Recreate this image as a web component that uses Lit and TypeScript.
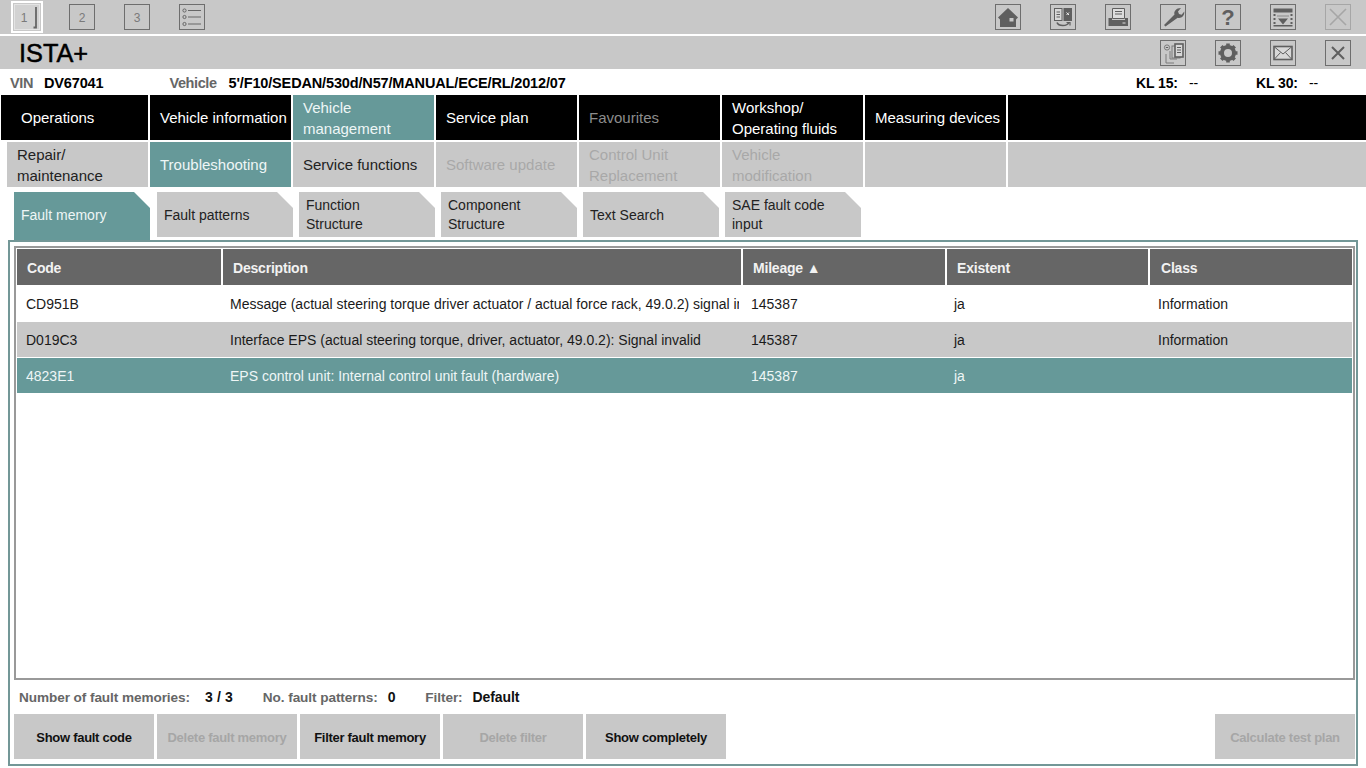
import { LitElement, html, css, svg } from "lit";
import { customElement } from "lit/decorators.js";

const G = "#5f5f5f";
const icons: Record<string, any> = {
  n1: svg`<text x="10" y="18" font-size="12" fill="#7a7a7a" text-anchor="middle" font-family="Liberation Sans">1</text><path d="M22 3v20.500h-2.500" fill="none" stroke="#666" stroke-width="1.800"/>`,
  n2: svg`<text x="13" y="18" font-size="12" fill="#7a7a7a" text-anchor="middle" font-family="Liberation Sans">2</text>`,
  n3: svg`<text x="13" y="18" font-size="12" fill="#7a7a7a" text-anchor="middle" font-family="Liberation Sans">3</text>`,
  list: svg`<g fill="none" stroke="#666"><circle cx="5.500" cy="6.500" r="1.600"/><circle cx="5.500" cy="13" r="1.600"/><circle cx="5.500" cy="20" r="1.600"/><path d="M9 6.500h13M9 13h13M9 20h13"/></g>`,
  home: svg`<path d="M13 4 3 13.500 5 15.500V23h16v-7.500l2-2z" fill="${G}"/><rect x="14.500" y="14" width="4" height="3.500" fill="#c8c8c8"/>`,
  swap: svg`<g fill="none" stroke="${G}"><rect x="4.500" y="4.500" width="7.500" height="12" fill="#d8d8d8"/><rect x="14" y="4.500" width="7.500" height="12" fill="${G}"/><path d="M6.500 8h3.500M6.500 10.500h3.500M6.500 13h3.500"/><path d="M16.500 8.500l2.500 2.500M19 8.500l-2.500 2.500" stroke="#eee"/><path d="M7 18.500c1.500 4 10 4 12 0" stroke-width="1.600"/><path d="M16.500 18.500h3.500v3" stroke-width="1.200"/></g>`,
  printer: svg`<path d="M7.500 4.500h12v10h-12z" fill="#ddd" stroke="${G}"/><path d="M10 7.500h7M10 10h7" stroke="${G}"/><path d="M3.500 14h3.500v2h13v-2h3v8h-19.500z" fill="${G}"/><path d="M17.500 19h3" stroke="#ddd"/>`,
  wrench: svg`<path d="M5.500 22.500 4 21l10.500-10.500c-1-3 1.500-6.500 6.500-6.500l-3 3.500 1 2.500 2.600.8 2.700-3.200c.4 4.500-3.300 7.200-6.600 6.200z" fill="${G}"/>`,
  help: svg`<text x="13" y="21" font-size="22" font-weight="700" fill="${G}" text-anchor="middle" font-family="Liberation Sans">?</text>`,
  down: svg`<rect x="3.500" y="4.500" width="19" height="4" fill="${G}"/><rect x="3.500" y="21" width="19" height="1.500" fill="${G}"/><path d="M4.500 10v10M21.500 10v10" stroke="${G}" stroke-width="2" stroke-dasharray="2 2"/><path d="M8 14.500h10l-5 6z" fill="${G}"/><path d="M7 12h12" stroke="#8a8a8a"/>`,
  xoff: svg`<path d="M5 5l16 16M21 5 5 21" stroke="#a6a6a6" stroke-width="1.600"/>`,
  docs: svg`<g fill="none" stroke="${G}"><circle cx="7" cy="7.500" r="2.600" stroke="#7a7a7a"/><path d="M5.800 7.500h2.400"/><path d="M6 14v9h8" stroke="#7a7a7a"/><path d="M10 11v8h7" stroke="#7a7a7a"/><rect x="12" y="6" width="8" height="12" stroke="#7a7a7a"/><rect x="15" y="4" width="8" height="13" fill="#d8d8d8" stroke-width="1.600"/><path d="M17 7.500h4M17 10h4M17 12.500h4"/></g>`,
  gear: svg`<circle cx="13" cy="13" r="6" fill="none" stroke="${G}" stroke-width="4"/><g stroke="${G}" stroke-width="3.600"><path d="M13 3.500v4M13 18.500v4M3.500 13h4M18.500 13h4M6.300 6.300l2.800 2.800M16.900 16.900l2.800 2.800M19.700 6.300l-2.800 2.800M9.100 16.900l-2.800 2.800"/></g>`,
  mail: svg`<rect x="4" y="6.500" width="18" height="13" fill="#d8d8d8" stroke="${G}" stroke-width="1.600"/><path d="M4.500 7l8.500 7 8.500-7M4.500 19l6-6.500M21.500 19l-6-6.500" fill="none" stroke="${G}"/>`,
  x: svg`<path d="M7 7l12 12M19 7 7 19" stroke="${G}" stroke-width="2"/>`,
};

const nav = [["Operations"], ["Vehicle information"], ["Vehicle", "management"], ["Service plan"], ["Favourites"], ["Workshop/", "Operating fluids"], ["Measuring devices"], []];
const sub = [["Repair/", "maintenance"], ["Troubleshooting"], ["Service functions"], ["Software update"], ["Control Unit", "Replacement"], ["Vehicle", "modification"], [], []];
const tabs = [["Fault memory"], ["Fault patterns"], ["Function", "Structure"], ["Component", "Structure"], ["Text Search"], ["SAE fault code", "input"]];
const rows = [
  ["CD951B", "Message (actual steering torque driver actuator / actual force rack, 49.0.2) signal invalid", "145387", "ja", "Information"],
  ["D019C3", "Interface EPS (actual steering torque, driver, actuator, 49.0.2): Signal invalid", "145387", "ja", "Information"],
  ["4823E1", "EPS control unit: Internal control unit fault (hardware)", "145387", "ja", ""],
];

@customElement("app-root")
export class AppRoot extends LitElement {
  static styles = css`
    :host { display: block; width: 1366px; height: 768px; overflow: hidden; background: #fff; font-family: "Liberation Sans", Arial, sans-serif; color: #000; }
    .bar { background: #c8c8c8; display: flex; align-items: center; }
    .top { height: 34px; padding: 0 15px 0 14px; margin-bottom: 2px; }
    .title { height: 33px; padding: 0 15px 0 19px; }
    .title h1 { margin: 1px 0 0; font-size: 25.300px; font-weight: 400; line-height: 32px; color: #000; -webkit-text-stroke: 0.5px #000; }
    .group { display: flex; gap: 29px; }
    .right { margin-left: auto; }
    .ic { width: 26px; height: 26px; box-sizing: border-box; border: 1px solid #6e6e6e; display: block; }
    .ic svg { display: block; width: 26px; height: 26px; margin: -1px; }
    .ic.off { border-color: #a6a6a6; }
    .ic.active { border-color: #e4e4e4; box-shadow: 0 0 0 1px #c8c8c8, 0 0 0 3px #fff; background: #d2d2d2; }
    .vin { height: 26px; box-sizing: border-box; padding: 2px 0 0 10px; display: flex; align-items: center; font-size: 14.500px; }
    .vin .l { color: #666; font-weight: 700; letter-spacing: -0.4px; }
    .vin .vinl { margin-right: 11px; }
    .vin .v { font-weight: 700; color: #000; letter-spacing: -0.15px; }
    .vin .veh { margin-left: 66px; margin-right: 12px; }
    .kl { margin-left: auto; display: flex; font-weight: 700; font-size: 14px; letter-spacing: -0.1px; }
    .kl span { margin-right: 11px; }
    .kl .k { width: 120px; display: flex; }
    .kl .k i { font-style: normal; font-weight: 400; }
    .kl .k:last-child { width: 110px; }
    .nav { display: grid; grid-template-columns: 147px repeat(6, 141px) 1fr; column-gap: 2px; padding-left: 1px; }
    .nav > div { height: 45px; background: #000; color: #fff; font-size: 15px; line-height: 21px; padding: 0 0 0 10px; display: flex; align-items: center; box-sizing: border-box; white-space: pre-line; }
    .nav > div:first-child { padding-left: 20px; }
    .nav > div.sel { background: #669999; color: #eef6f6; }
    .nav > div.dim { color: #8c8c8c; }
    .sub { margin-top: 2px; padding-left: 7px; grid-template-columns: 141px repeat(6, 141px) 1fr; }
    .sub > div { background: #c8c8c8; color: #222; }
    .sub > div:first-child { padding-left: 10px; }
    .sub > div.dim { color: #a8a8a8; }
    .tabs { display: flex; gap: 6px; height: 48px; margin-top: 5px; padding-left: 14px; }
    .tab { width: 136px; height: 45px; background: #c8c8c8; color: #222; font-size: 14px; line-height: 19px; padding-left: 7px; box-sizing: border-box; display: flex; align-items: center; clip-path: polygon(0 0, calc(100% - 16px) 0, 100% 16px, 100% 100%, 0 100%); white-space: pre-line; }
    .tab.one { padding-top: 1px; }
    .tab.sel { margin-right: 1px; height: 48px; padding-top: 0; padding-bottom: 2px; background: #669999; color: #eef6f6; }
    .panel { margin-left: 8px; width: 1350px; height: 526px; box-sizing: border-box; border: 2px solid #739797; padding: 4px 1px 0 4px; }
    .tbl { width: 1341px; height: 434px; box-sizing: border-box; border: 2px solid #999; padding: 1px 1px 0 1px; }
    .row { display: grid; grid-template-columns: 206px 520px 204px 203px 1fr; font-size: 14px; }
    .row > div { overflow: hidden; white-space: nowrap; display: flex; align-items: center; box-sizing: border-box; padding-left: 8px; padding-top: 1px; }
    .row > div:nth-child(1) { padding-left: 9px; }
    .row > div:nth-child(2) { padding-left: 7px; border-right: 4px solid transparent; }
    .row > div:nth-child(4) { padding-left: 7px; }
    .row.head > div { background: #666; color: #f2f2f2; height: 36px; font-weight: 700; border-right: 2px solid #fff; padding-left: 10px; letter-spacing: -0.2px; }
    .row.head > div:last-child { border-right: 0; padding-left: 11px; }
    .r0 { height: 37px; background: #fff; color: #1a1a1a; }
    .r1 { height: 35px; background: #c8c8c8; color: #1a1a1a; margin-bottom: 1px; }
    .r2 { height: 35px; background: #669999; color: #eef6f6; }
    .stat { display: flex; align-items: center; height: 34px; font-size: 13.600px; font-weight: 700; padding-left: 5px; letter-spacing: -0.08px; }
    .stat .l { color: #666; margin-right: 10px; }
    .stat .l.first { margin-right: 15px; }
    .stat .v { color: #111; font-size: 14px; word-spacing: 0.5px; }
    .stat .v.sp { margin-right: 30px; }
    .btns { display: flex; gap: 3px; }
    .btn { width: 140px; height: 45px; padding-top: 1px; box-sizing: border-box; background: #c8c8c8; color: #111; font-size: 13px; font-weight: 700; display: flex; align-items: center; justify-content: center; letter-spacing: -0.28px; }
    .btn.dim { color: #a6a6a6; }
    .btn.end { margin-left: auto; }
  `;

  icon(name: string, cls = "") {
    return html`<span class="ic ${cls}"><svg viewBox="0 0 26 26">${icons[name]}</svg></span>`;
  }

  render() {
    return html`
      <div class="bar top">
        <div class="group">
          ${this.icon("n1", "active")}${this.icon("n2")}${this.icon("n3")}${this.icon("list")}
        </div>
        <div class="group right">
          ${this.icon("home")}${this.icon("swap")}${this.icon("printer")}${this.icon("wrench")}${this.icon("help")}${this.icon("down")}${this.icon("xoff", "off")}
        </div>
      </div>
      <div class="bar title">
        <h1>ISTA+</h1>
        <div class="group right">
          ${this.icon("docs")}${this.icon("gear")}${this.icon("mail")}${this.icon("x")}
        </div>
      </div>
      <div class="vin">
        <span class="l vinl">VIN</span><span class="v">DV67041</span>
        <span class="l veh">Vehicle</span><span class="v">5'/F10/SEDAN/530d/N57/MANUAL/ECE/RL/2012/07</span>
        <div class="kl">
          <div class="k"><span>KL 15:</span><i>--</i></div>
          <div class="k"><span>KL 30:</span><i>--</i></div>
        </div>
      </div>
      <div class="nav">
        ${nav.map((n, i) => html`<div class="${i === 2 ? "sel" : i === 4 ? "dim" : ""}">${n.join("\n")}</div>`)}
      </div>
      <div class="nav sub">
        ${sub.map((n, i) => html`<div class="${i === 1 ? "sel" : i >= 3 ? "dim" : ""}">${n.join("\n")}</div>`)}
      </div>
      <div class="tabs">
        ${tabs.map((t, i) => html`<div class="tab ${i === 0 ? "sel" : ""} ${t.length === 1 ? "one" : ""}">${t.join("\n")}</div>`)}
      </div>
      <div class="panel">
        <div class="tbl">
          <div class="row head">
            <div>Code</div><div>Description</div><div>Mileage ▲</div><div>Existent</div><div>Class</div>
          </div>
          ${rows.map((r, i) => html`<div class="row r${i}">
            <div>${r[0]}</div><div>${r[1]}</div><div>${r[2]}</div><div>${r[3]}</div><div>${r[4]}</div>
          </div>`)}
        </div>
        <div class="stat">
          <span class="l first">Number of fault memories:</span><span class="v sp">3 / 3</span>
          <span class="l">No. fault patterns:</span><span class="v sp">0</span>
          <span class="l">Filter:</span><span class="v">Default</span>
        </div>
        <div class="btns">
          <div class="btn">Show fault code</div>
          <div class="btn dim">Delete fault memory</div>
          <div class="btn">Filter fault memory</div>
          <div class="btn dim">Delete filter</div>
          <div class="btn">Show completely</div>
          <div class="btn dim end">Calculate test plan</div>
        </div>
      </div>
    `;
  }
}
